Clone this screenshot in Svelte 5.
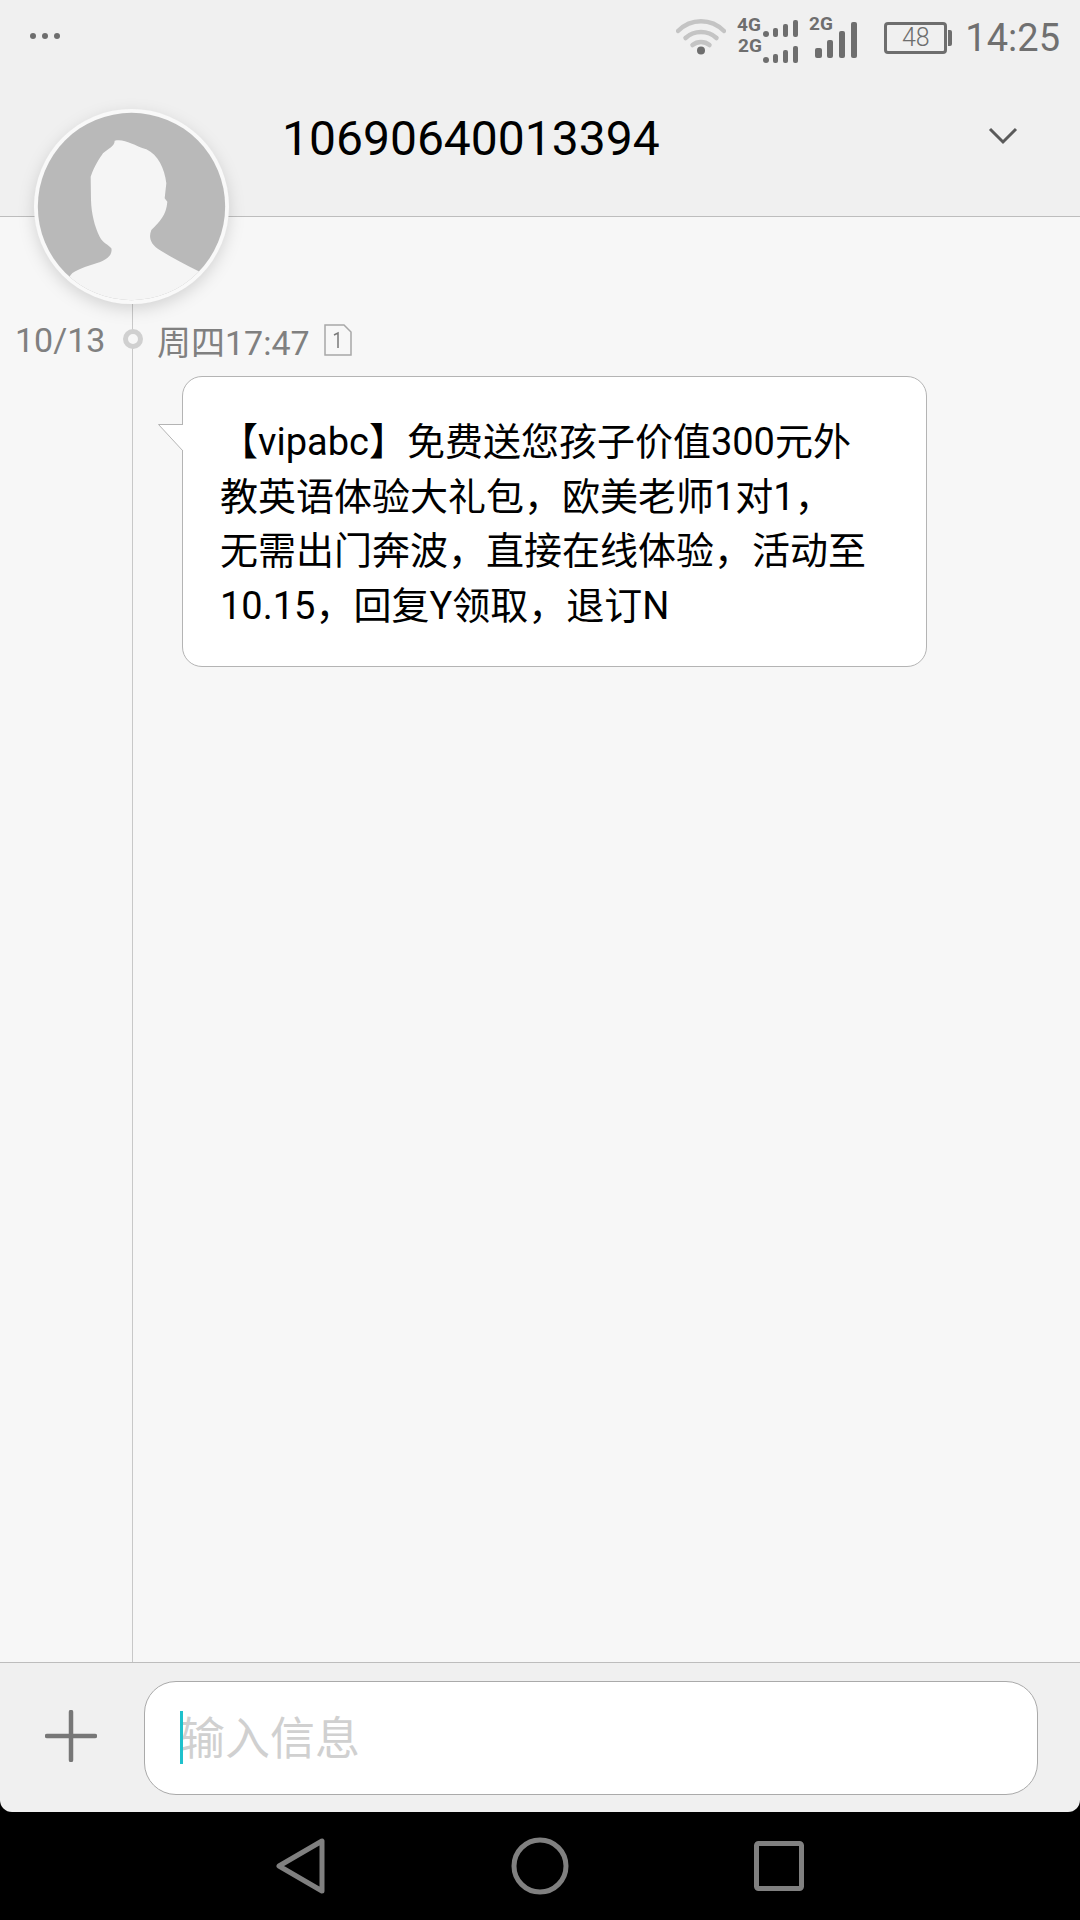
<script>
	const messageLines = [
		'【vipabc】免费送您孩子价值300元外',
		'教英语体验大礼包，欧美老师1对1，',
		'无需出门奔波，直接在线体验，活动至',
		'10.15，回复Y领取，退订N'
	];
</script>

<div class="screen">
	<header class="header">
		<div class="status">
			<div class="dots"><i></i><i></i><i></i></div>
			<div class="status-right">
				<svg class="wifi" width="50" height="40" viewBox="0 0 50 40" fill="none" stroke="#c4c4c4" stroke-width="4.5" stroke-linecap="round">
					<path d="M2 14 C15 1 35 1 48 14" />
					<path d="M9.5 21 C18 13 32 13 40.5 21" />
					<path d="M16.5 28 C21.5 24 28.5 24 33.5 28" />
					<circle cx="25" cy="33.5" r="4" fill="#6e6e6e" stroke="none" />
				</svg>
				<svg class="signal" width="126" height="54" viewBox="0 0 126 54" fill="#6e6e6e">
					<text x="0" y="20" class="net">4G</text>
					<text x="1" y="41" class="net">2G</text>
					<circle cx="29" cy="23" r="3" />
					<rect x="36" y="17" width="5" height="9" rx="2" />
					<rect x="46" y="13" width="5" height="13" rx="2" />
					<rect x="56" y="9" width="5" height="17" rx="2" />
					<circle cx="29" cy="49" r="3" />
					<rect x="36" y="43" width="5" height="9" rx="2" />
					<rect x="46" y="39" width="5" height="13" rx="2" />
					<rect x="56" y="35" width="5" height="17" rx="2" />
					<text x="72" y="19" class="net">2G</text>
					<rect x="78" y="37" width="7" height="10" rx="2" />
					<rect x="90" y="29" width="6" height="18" rx="2" />
					<rect x="102" y="20" width="6" height="27" rx="2" />
					<rect x="114" y="11" width="6" height="36" rx="2" />
				</svg>
				<div class="battery"><span>48</span></div>
				<div class="clock">14:25</div>
			</div>
		</div>
		<div class="title-row">
			<div class="title">10690640013394</div>
			<svg class="chevron" width="32" height="20" viewBox="0 0 32 20" fill="none" stroke="#5a5a5a" stroke-width="3">
				<path d="M3 3 L16 16 L29 3" />
			</svg>
		</div>
	</header>

	<main class="thread">
		<div class="timeline"></div>
		<svg class="avatar" width="195" height="195" viewBox="103 57 585 585">
			<defs>
				<clipPath id="avatar-clip"><circle cx="395.500" cy="349.500" r="281" /></clipPath>
			</defs>
			<circle cx="395.500" cy="349.500" r="292.500" fill="#f9f9f9" />
			<circle cx="395.500" cy="349.500" r="281" fill="#b9b9b9" />
			<path
				clip-path="url(#avatar-clip)"
				fill="#f5f5f5"
				d="M345 152 C375 145 400 165 440 178 C475 195 495 235 500 280 L495 325 L503 335 C500 375 480 395 455 420 C445 445 455 465 480 480 C520 505 560 525 600 545 L640 650 L150 650 L213 555 C225 540 260 530 290 520 C320 512 340 495 335 475 C325 462 310 460 300 440 C285 410 275 370 274 330 L273 260 C285 225 300 205 310 190 C325 175 345 170 345 152 Z"
			/>
		</svg>

		<div class="meta">
			<span class="date">10/13</span>
			<span class="ring"></span>
			<span class="time">周四17:47</span>
			<svg class="sim" width="28" height="32" viewBox="0 0 28 32" fill="none" stroke="#a8a8a8" stroke-width="1.500">
				<path d="M1 1 H20 L27 8 V31 H1 Z" />
				<path d="M10 11 L14 9 V24" stroke="#7a7a7a" />
			</svg>
		</div>

		<div class="bubble">
			<svg class="tail" width="27" height="29" viewBox="0 0 27 29">
				<path d="M26 0.500 H1.500 L26 27 Z" fill="#fff" />
				<path d="M26 0.500 H1.500 L26 27" fill="none" stroke="#b4b4b4" stroke-width="1" />
			</svg>
			{#each messageLines as line}
				<div class="line">{line}</div>
			{/each}
		</div>
	</main>

	<footer class="composer">
		<svg class="plus" width="52" height="52" viewBox="0 0 52 52" stroke="#777" stroke-width="4.500" stroke-linecap="round">
			<path d="M26 2 V50 M2 26 H50" />
		</svg>
		<div class="input">
			<span class="caret"></span>
			<span class="placeholder">输入信息</span>
		</div>
	</footer>

	<nav class="nav">
		<svg width="50" height="58" viewBox="0 0 50 58" fill="none" stroke="#808080" stroke-width="5" stroke-linejoin="round">
			<path d="M46 4 V54 L3 29 Z" />
		</svg>
		<svg width="58" height="58" viewBox="0 0 58 58" fill="none" stroke="#808080" stroke-width="5">
			<circle cx="29" cy="29" r="26" />
		</svg>
		<svg width="50" height="50" viewBox="0 0 50 50" fill="none" stroke="#808080" stroke-width="5" stroke-linejoin="round">
			<rect x="2.500" y="2.500" width="45" height="45" rx="2" />
		</svg>
	</nav>
</div>

<style>
	:global(body) {
		margin: 0;
		background: #000;
	}

	.screen {
		width: 1080px;
		height: 1920px;
		display: flex;
		flex-direction: column;
		font-family: Roboto, 'Noto Sans CJK SC', sans-serif;
		background: #000;
		overflow: hidden;
	}

	.header {
		height: 216px;
		flex: none;
		background: #f0f0f0;
		border-bottom: 1px solid #bdbdbd;
	}

	.status {
		height: 72px;
		box-sizing: border-box;
		padding: 3px 20px 0 30px;
		display: flex;
		align-items: center;
		justify-content: space-between;
	}

	.dots {
		display: flex;
		gap: 6px;
		margin-top: -3px;
	}

	.dots i {
		width: 6px;
		height: 6px;
		border-radius: 50%;
		background: #6e6e6e;
	}

	.status-right {
		display: flex;
		align-items: center;
	}

	.wifi {
		margin-right: 11px;
		margin-top: -1px;
	}

	.signal {
		margin-right: 21px;
	}

	.net {
		font-family: Roboto, sans-serif;
		font-size: 19px;
		font-weight: 700;
	}

	.battery {
		width: 57px;
		height: 26px;
		border: 3px solid #6e6e6e;
		border-radius: 4px;
		margin-right: 18px;
		position: relative;
		display: flex;
		align-items: center;
		justify-content: center;
		color: #6e6e6e;
		font-size: 25px;
		font-weight: 300;
	}

	.battery::after {
		content: '';
		position: absolute;
		right: -8px;
		top: 5px;
		width: 4px;
		height: 16px;
		background: #6e6e6e;
		border-radius: 0 2px 2px 0;
	}

	.clock {
		color: #707070;
		font-size: 38px;
		line-height: 44px;
	}

	.title-row {
		height: 134px;
		display: flex;
		align-items: flex-start;
		justify-content: space-between;
		padding: 0 55px 0 282px;
	}

	.title {
		font-size: 48px;
		line-height: 56px;
		margin-top: 39px;
		color: #000;
	}

	.chevron {
		margin-top: 54px;
		margin-right: 6px;
	}

	.thread {
		flex: 1;
		position: relative;
		background: #f7f7f7;
		padding-top: 101px;
	}

	.timeline {
		position: absolute;
		left: 132px;
		top: 0;
		bottom: 0;
		width: 1px;
		background: #c8c8c8;
	}

	.avatar {
		position: absolute;
		left: 34px;
		top: -108px;
		filter: drop-shadow(0 5px 8px rgba(0, 0, 0, 0.14));
	}

	.meta {
		position: relative;
		height: 44px;
		display: flex;
		align-items: center;
		color: #808080;
		font-size: 34px;
	}

	.date {
		margin-left: 15px;
		width: 108px;
	}

	.ring {
		width: 20px;
		height: 20px;
		box-sizing: border-box;
		border: 5px solid #d0d0d0;
		border-radius: 50%;
		background: #f7f7f7;
		margin: -3px 14px 0 0;
	}

	.sim {
		margin-left: 14px;
	}

	.bubble {
		position: relative;
		width: 745px;
		box-sizing: border-box;
		margin: 14px 0 0 182px;
		padding: 38px 30px 32px 37px;
		background: #fff;
		border: 1px solid #b4b4b4;
		border-radius: 20px;
		color: #000;
		font-size: 38px;
	}

	.line {
		height: 54.700px;
		line-height: 54.700px;
		white-space: nowrap;
	}

	.tail {
		position: absolute;
		left: -26px;
		top: 47px;
	}

	.composer {
		height: 150px;
		flex: none;
		box-sizing: border-box;
		display: flex;
		align-items: center;
		background: #f0f0f0;
		border-top: 1px solid #bdbdbd;
		border-radius: 0 0 12px 12px;
		padding: 0 42px 0 45px;
	}

	.plus {
		margin: 0 47px 4px 0;
	}

	.input {
		flex: 1;
		height: 114px;
		box-sizing: border-box;
		display: flex;
		align-items: center;
		position: relative;
		background: #fff;
		border: 1px solid #aaa;
		border-radius: 32px;
		padding-left: 35px;
	}

	.placeholder {
		color: #d0d0d0;
		font-size: 45px;
		margin-bottom: 5px;
	}

	.caret {
		position: absolute;
		left: 35px;
		top: 29px;
		width: 3px;
		height: 53px;
		background: #1fc1cc;
	}

	.nav {
		height: 108px;
		flex: none;
		display: flex;
		align-items: center;
		background: #000;
		padding-left: 276px;
		gap: 185px;
	}
</style>
